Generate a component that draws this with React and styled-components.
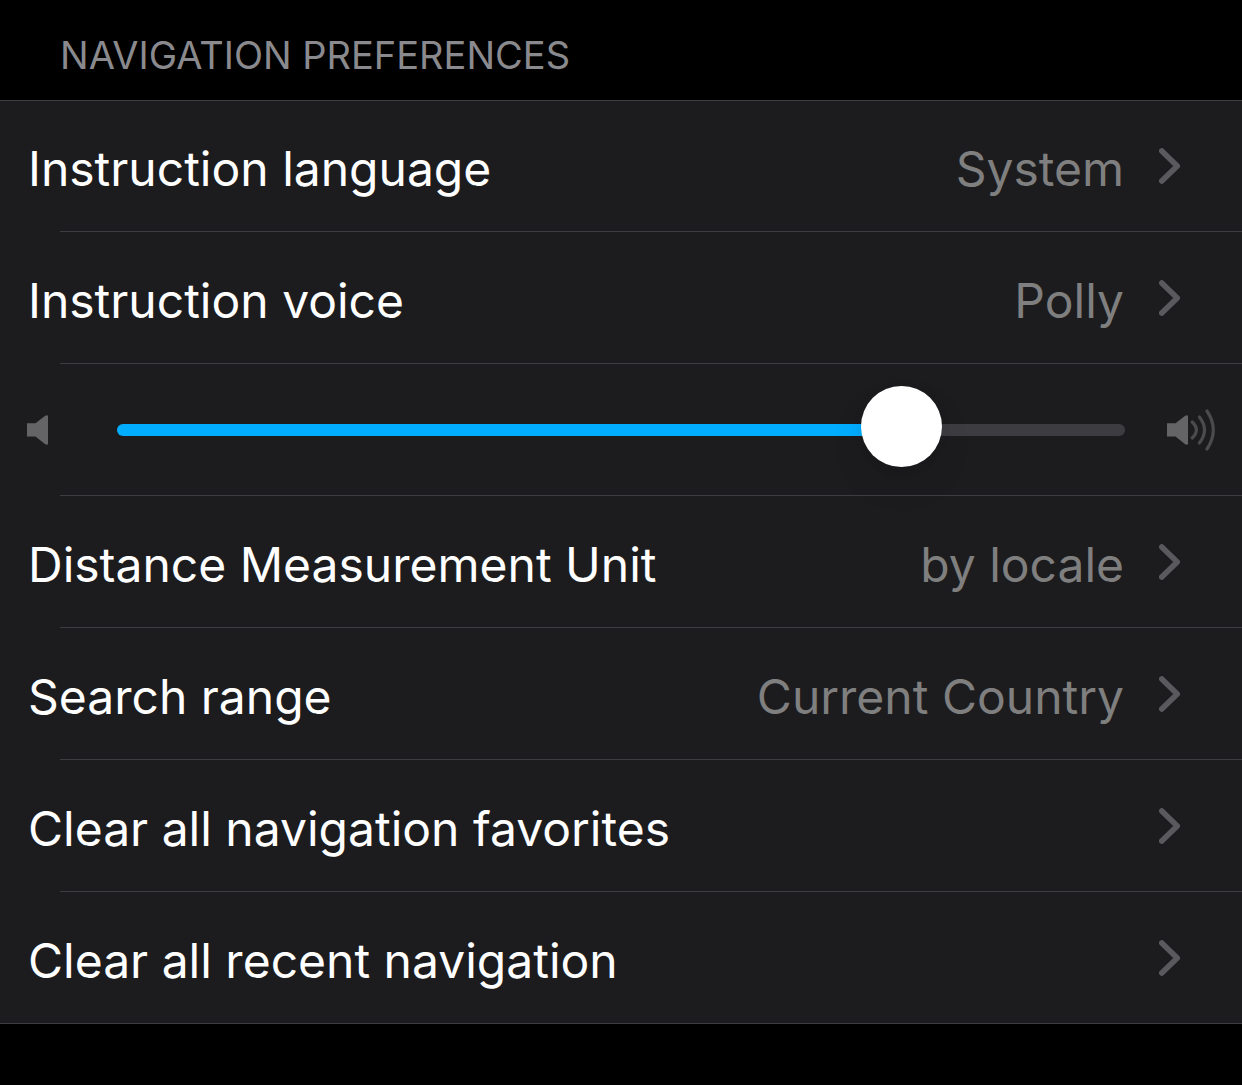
import React, { useState } from "react";
import styled, { createGlobalStyle } from "styled-components";

const GlobalStyle = createGlobalStyle`
  *, *::before, *::after {
    box-sizing: border-box;
  }
  body {
    margin: 0;
    background: #000;
    color: #fff;
    font-family: Inter, "Liberation Sans", sans-serif;
  }
`;

const Page = styled.main`
  display: flex;
  flex-direction: column;
  padding-bottom: 60px;
`;

const SectionTitle = styled.h1`
  margin: 0;
  padding: 31px 60px 21px;
  color: #8a8a8e;
  font-size: 38px;
  font-weight: 400;
  line-height: 48px;
  text-transform: uppercase;
`;

const List = styled.ul`
  margin: 0;
  padding: 0;
  list-style: none;
  background: #1c1c1e;
  box-shadow: inset 0 1px 0 #3d3d41;
`;

const Item = styled.li`
  display: flex;
  flex-direction: column;
  height: 132px;

  &::after {
    content: "";
    height: 1px;
    margin-left: 60px;
    background: #3d3d41;
  }

  &:last-child::after {
    margin-left: 0;
  }
`;

const RowButton = styled.button`
  display: flex;
  flex: 1;
  align-items: center;
  gap: 35px;
  width: 100%;
  padding: 0 61px 0 28px;
  border: 0;
  background: none;
  color: inherit;
  font: inherit;
  font-size: 48px;
  line-height: 60px;
  text-align: left;
  cursor: pointer;
`;

const Label = styled.span`
  flex: 1;
  padding-top: 6px;
`;

const Value = styled.span`
  padding-top: 6px;
  color: #7f7f7f;
`;

const SliderRow = styled.div`
  display: flex;
  flex: 1;
  align-items: center;
  gap: 42px;
  padding: 0 27px;
`;

const Icon = styled.svg`
  flex: none;
  fill: none;
`;

const Slider = styled.input`
  flex: 1;
  min-width: 0;
  height: 12px;
  margin: 0;
  appearance: none;
  border-radius: 6px;
  background: linear-gradient(
    to right,
    #00adff ${({ $fill }) => $fill}%,
    #3d3d41 ${({ $fill }) => $fill}%
  );
  cursor: pointer;

  &::-webkit-slider-runnable-track {
    height: 12px;
  }

  &::-webkit-slider-thumb {
    appearance: none;
    width: 81px;
    height: 81px;
    margin-top: -38px;
    border-radius: 50%;
    background: #fff;
    box-shadow: 0 18px 36px rgba(0, 0, 0, 0.08), 0 2px 12px rgba(0, 0, 0, 0.05);
  }
`;

function Chevron() {
  return (
    <Icon width="22" height="36" viewBox="0 0 22 36" aria-hidden="true">
      <path
        d="M2.8 3 18.2 18 2.8 33"
        stroke="#5a5a5e"
        strokeWidth="5.6"
        strokeLinecap="round"
        strokeLinejoin="round"
      />
    </Icon>
  );
}

function Speaker({ loud }) {
  return (
    <Icon width="48" height="44" viewBox="0 0 48 44" aria-hidden="true">
      <path d="M0 15.3H8.5L18.5 7.5H21V36.5H18.5L8.5 28.6H0Z" fill="#646467" />
      {loud && (
        <g stroke="#4b4b4e" strokeWidth="3.2" strokeLinecap="round">
          <path d="M25.2 14Q33.6 22 25.2 30" />
          <path d="M32.4 9Q42.6 22 32.4 35" />
          <path d="M40 3Q52.6 22 40 41" />
        </g>
      )}
    </Icon>
  );
}

function LinkRow({ label, value }) {
  return (
    <Item>
      <RowButton type="button">
        <Label>{label}</Label>
        {value && <Value>{value}</Value>}
        <Chevron />
      </RowButton>
    </Item>
  );
}

function VolumeRow() {
  const [volume, setVolume] = useState(80.3);
  return (
    <Item>
      <SliderRow>
        <Speaker />
        <Slider
          type="range"
          aria-label="Instruction volume"
          min="0"
          max="100"
          step="0.1"
          value={volume}
          $fill={volume}
          onChange={(event) => setVolume(Number(event.target.value))}
        />
        <Speaker loud />
      </SliderRow>
    </Item>
  );
}

export default function App() {
  return (
    <>
      <GlobalStyle />
      <Page>
        <SectionTitle>Navigation preferences</SectionTitle>
        <List>
          <LinkRow label="Instruction language" value="System" />
          <LinkRow label="Instruction voice" value="Polly" />
          <VolumeRow />
          <LinkRow label="Distance Measurement Unit" value="by locale" />
          <LinkRow label="Search range" value="Current Country" />
          <LinkRow label="Clear all navigation favorites" />
          <LinkRow label="Clear all recent navigation" />
        </List>
      </Page>
    </>
  );
}
